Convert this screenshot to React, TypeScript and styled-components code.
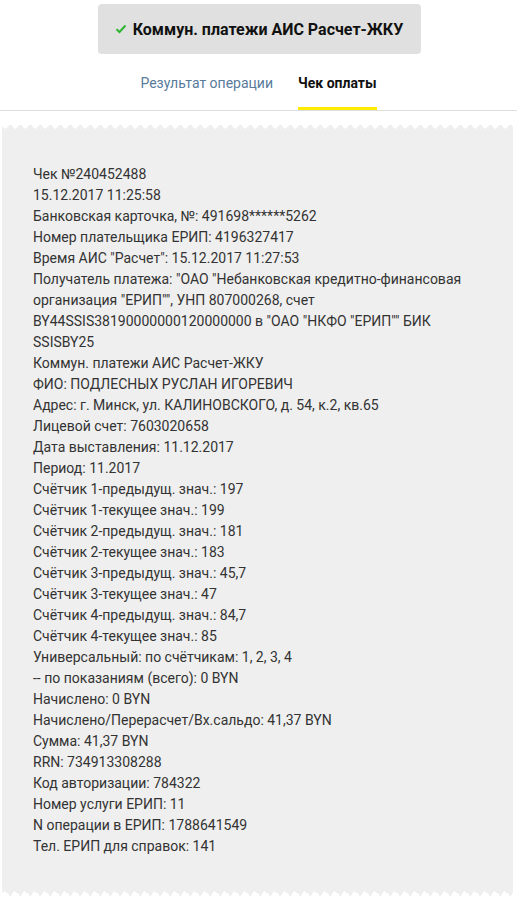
import React from "react";
import styled, { createGlobalStyle } from "styled-components";

const GlobalStyle = createGlobalStyle`
  html, body {
    margin: 0;
    padding: 0;
    background: #ffffff;
    font-family: Roboto, "Noto Sans", "Liberation Sans", sans-serif;
  }
  * { box-sizing: border-box; }
`;

const Page = styled.div`
  width: 517px;
  display: flex;
  flex-direction: column;
  padding-top: 4px;
`;

const Header = styled.div`
  display: flex;
  justify-content: center;
`;

const TitleButton = styled.div`
  width: 323px;
  height: 50px;
  margin-left: 1px;
  border-radius: 4px;
  background: #dfe0df;
  display: flex;
  align-items: center;
  justify-content: center;
  gap: 6px;
  font-size: 16px;
  font-weight: 700;
  color: #111;
`;

const Tabs = styled.nav`
  display: flex;
  justify-content: center;
  gap: 25px;
  border-bottom: 1px solid #dddddd;
`;

const Tab = styled.div<{ $active?: boolean }>`
  padding: 19px 0 14px;
  line-height: 20px;
  font-size: 14px;
  font-weight: ${(p) => (p.$active ? 700 : 400)};
  color: ${(p) => (p.$active ? "#111" : "#587a9b")};
  border-bottom: 3px solid ${(p) => (p.$active ? "#ffec00" : "transparent")};
`;

const Receipt = styled.div`
  margin: 13px 4px 0 2px;
  display: flex;
  flex-direction: column;
`;

const EdgeTop = styled.div`
  height: 5px;
  background: conic-gradient(from 135deg at 50% 0, #efefef 90deg, transparent 0);
  background-size: 10px 5px;
  background-position: 3px 0;
`;

const EdgeBottom = styled.div`
  height: 5px;
  background: conic-gradient(from -45deg at 50% 100%, #efefef 90deg, transparent 0);
  background-size: 10px 5px;
  background-position: 3px 0;
`;

const ReceiptBody = styled.div`
  background: #efefef;
  padding: 35px 40px 34px 31px;
  font-size: 14px;
  line-height: 21px;
  color: #333333;
`;

const Line = styled.div``;

const Check = () => (
  <svg width="12" height="10" viewBox="0 0 12 10">
    <polyline
      points="1.5,5.2 4.5,8 10.5,1.5"
      fill="none"
      stroke="#2fb52f"
      strokeWidth="2"
    />
  </svg>
);

const lines = [
  "Чек №240452488",
  "15.12.2017 11:25:58",
  "Банковская карточка, №: 491698******5262",
  "Номер плательщика ЕРИП: 4196327417",
  "Время АИС \"Расчет\": 15.12.2017 11:27:53",
  "Получатель платежа: \"ОАО \"Небанковская кредитно-финансовая организация \"ЕРИП\"\", УНП 807000268, счет BY44SSIS38190000000120000000 в \"ОАО \"НКФО \"ЕРИП\"\" БИК SSISBY25",
  "Коммун. платежи АИС Расчет-ЖКУ",
  "ФИО: ПОДЛЕСНЫХ РУСЛАН ИГОРЕВИЧ",
  "Адрес: г. Минск, ул. КАЛИНОВСКОГО, д. 54, к.2, кв.65",
  "Лицевой счет: 7603020658",
  "Дата выставления: 11.12.2017",
  "Период: 11.2017",
  "Счётчик 1-предыдущ. знач.: 197",
  "Счётчик 1-текущее знач.: 199",
  "Счётчик 2-предыдущ. знач.: 181",
  "Счётчик 2-текущее знач.: 183",
  "Счётчик 3-предыдущ. знач.: 45,7",
  "Счётчик 3-текущее знач.: 47",
  "Счётчик 4-предыдущ. знач.: 84,7",
  "Счётчик 4-текущее знач.: 85",
  "Универсальный: по счётчикам: 1, 2, 3, 4",
  "-- по показаниям (всего): 0 BYN",
  "Начислено: 0 BYN",
  "Начислено/Перерасчет/Вх.сальдо: 41,37 BYN",
  "Сумма: 41,37 BYN",
  "RRN: 734913308288",
  "Код авторизации: 784322",
  "Номер услуги ЕРИП: 11",
  "N операции в ЕРИП: 1788641549",
  "Тел. ЕРИП для справок: 141",
];

export default function App() {
  return (
    <>
      <GlobalStyle />
      <Page>
        <Header>
          <TitleButton>
            <Check />
            <span>Коммун. платежи АИС Расчет-ЖКУ</span>
          </TitleButton>
        </Header>
        <Tabs>
          <Tab>Результат операции</Tab>
          <Tab $active>Чек оплаты</Tab>
        </Tabs>
        <Receipt>
          <EdgeTop />
          <ReceiptBody>
            {lines.map((l, i) => (
              <Line key={i}>{l}</Line>
            ))}
          </ReceiptBody>
          <EdgeBottom />
        </Receipt>
      </Page>
    </>
  );
}
